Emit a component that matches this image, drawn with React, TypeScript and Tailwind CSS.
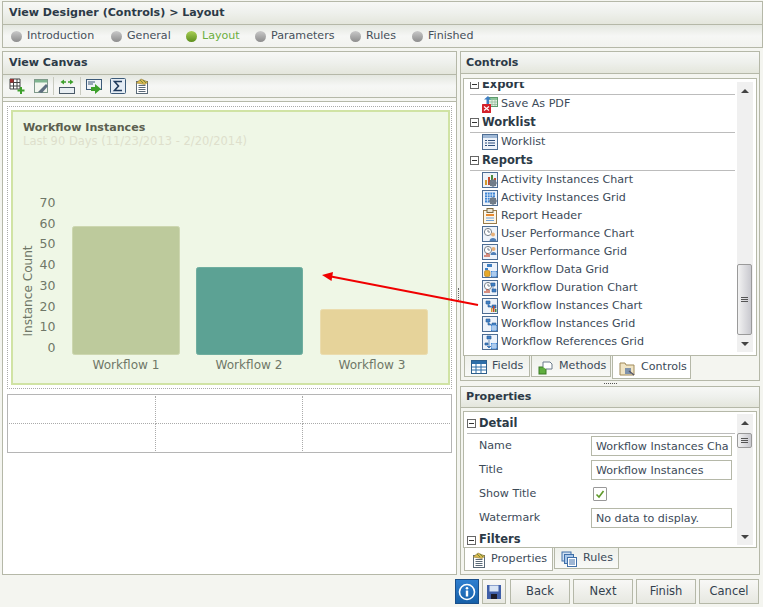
import React from "react";

const font = "font-['DejaVu_Sans',sans-serif]";
const headGrad = "bg-gradient-to-b from-[#f7f8f6] via-[#eef0ec] to-[#e4e6dc]";
const barGrad = "bg-gradient-to-b from-[#e4e7e0] via-[#f6f7f5] to-[#f2f3ef]";

type IconName = "pdf"|"list"|"chartGear"|"gridGear"|"header"|"perfChart"|"perfGrid"|"dataGrid"|"durChart"|"wfChart"|"wfGrid"|"refGrid";

function Frame({ children }: { children?: React.ReactNode }) {
  return (
    <svg width="16" height="16" viewBox="0 0 16 16" className="shrink-0">
      <rect x="0.5" y="0.5" width="15" height="15" fill="#eef3fa" stroke="#4d6d94" />
      {children}
    </svg>
  );
}
function Grid({ x = 9, y = 9 }: { x?: number; y?: number }) {
  return (
    <g>
      <rect x={x} y={y} width="6" height="6" fill="#3f86d6" />
      <path d={`M${x} ${y + 2}h6M${x} ${y + 4}h6M${x + 2} ${y}v6M${x + 4} ${y}v6`} stroke="#fff" strokeWidth="0.7" />
    </g>
  );
}
function Clock() {
  return <g><circle cx="6" cy="6" r="3.6" fill="#fff" stroke="#77818c" /><path d="M6 3.8V6h2" stroke="#77818c" fill="none" /></g>;
}
function Flow() {
  return <path d="M4 3h4v3H4zM10 7h4v3h-4zM6 6v3h4" fill="#3f7fc4" stroke="#2d5f9c" strokeWidth="0.6" />;
}
function Gear() {
  return <g><circle cx="11" cy="11" r="3.4" fill="#6f7b88" /><circle cx="11" cy="11" r="1.2" fill="#eef3fa" /><path d="M11 6.8v8.4M6.8 11h8.4M8 8l6 6M14 8l-6 6" stroke="#6f7b88" strokeWidth="1" /></g>;
}
function Bars() {
  return <g><rect x="3" y="8" width="2" height="5" fill="#d49a2c" /><rect x="6" y="5" width="2" height="8" fill="#c44a2e" /><rect x="9" y="3" width="2" height="10" fill="#4c8a3a" /><rect x="12" y="6" width="2" height="7" fill="#c44a2e" /></g>;
}

function TreeIcon({ name }: { name: IconName }) {
  switch (name) {
    case "pdf":
      return (
        <svg width="16" height="17" viewBox="0 0 16 17" className="shrink-0">
          <rect x="5.5" y="1.5" width="10" height="9" fill="#e5f2e0" stroke="#5d9a6a" />
          <rect x="6" y="2" width="9" height="2" fill="#8cc49a" />
          <path d="M6 6h9M6 8.5h9M10 4v6M13 4v6" stroke="#8db89a" strokeWidth="0.7" />
          <path d="M6 0 2 3.5h2.5V8H7V3.5h2z" fill="#3f7ec2" />
          <rect x="0" y="8" width="9" height="9" rx="0.5" fill="#d3202a" />
          <path d="M2 10.5l5 4M7 10.5l-5 4" stroke="#fff" strokeWidth="1.2" />
        </svg>
      );
    case "list":
      return <Frame><rect x="1" y="1" width="14" height="3" fill="#9fb8d6" /><path d="M3 6.5h2M6 6.5h7M3 9h2M6 9h7M3 11.5h2M6 11.5h7" stroke="#2d4f7c" strokeWidth="1.2" /></Frame>;
    case "chartGear":
      return <Frame><Bars /><Gear /></Frame>;
    case "gridGear":
      return <Frame><rect x="3" y="2.5" width="10" height="10" fill="#3f86d6" /><path d="M3 5h10M3 7.5h10M3 10h10M5.5 2.5v10M8 2.5v10M10.5 2.5v10" stroke="#fff" strokeWidth="0.6" /><Gear /></Frame>;
    case "header":
      return (
        <svg width="16" height="16" viewBox="0 0 16 16" className="shrink-0">
          <rect x="1.5" y="2.5" width="13" height="13" fill="#fdf6e6" stroke="#9a7c4a" />
          <rect x="5" y="0.5" width="6" height="4" fill="#e9e4d4" stroke="#7c6a44" />
          <path d="M4 7h8" stroke="#e98a2e" strokeWidth="2" /><path d="M4 10h8M4 12.5h8" stroke="#6fa0d8" />
        </svg>
      );
    case "perfChart":
      return <Frame><Clock /><circle cx="11" cy="8.5" r="2" fill="#e8b078" /><path d="M7.5 15c0-4 7-4 7 0z" fill="#4f7fb8" /></Frame>;
    case "perfGrid":
      return <Frame><Clock /><path d="M3 13v-2M5 13V9M7 13v-3" stroke="#c44a2e" strokeWidth="1.2" /><circle cx="11.5" cy="5" r="2" fill="#e8b078" /><path d="M8.5 11c0-4 6-4 6 0z" fill="#4f7fb8" /></Frame>;
    case "dataGrid":
      return <Frame><path d="M5 2h5v3H5zM3 6h3v2H3z" fill="#3f7fc4" /><rect x="2.5" y="8.5" width="5.5" height="6" rx="1.5" fill="#e6a92a" stroke="#a97a1a" strokeWidth="0.6" /><Grid /></Frame>;
    case "durChart":
      return <Frame><Clock /><path d="M3 13v-2M5 13V9M7 13v-3" stroke="#c44a2e" strokeWidth="1.2" /><path d="M9 3h4v3H9zM10 9h4v3h-4zM11 6v3" fill="#3f7fc4" stroke="#2d5f9c" strokeWidth="0.6" /></Frame>;
    case "wfChart":
      return <Frame><Flow /><rect x="9" y="10" width="1.5" height="4" fill="#d49a2c" /><rect x="11" y="8" width="1.5" height="6" fill="#c44a2e" /><rect x="13" y="11" width="1.5" height="3" fill="#4c8a3a" /></Frame>;
    case "wfGrid":
      return <Frame><Flow /><Grid /></Frame>;
    case "refGrid":
      return <Frame><path d="M5 2h4v3H5zM3 9h3v2H3zM7 6v6M5 12l2 2 2-2" fill="#3f7fc4" stroke="#2d5f9c" strokeWidth="0.7" /><Grid /></Frame>;
  }
}

function Minus() {
  return (
    <span className="w-[9px] h-[9px] border border-[#666] bg-white flex items-center justify-center shrink-0">
      <span className="w-[5px] h-px bg-[#333]" />
    </span>
  );
}

function GroupHead({ label, className = "" }: { label: string; className?: string }) {
  return (
    <div className={`h-[20px] flex items-center gap-[3px] border-b border-[#bcbcbc] font-bold text-[#2c3a47] text-[11.5px] ${className}`}>
      <Minus />
      {label}
    </div>
  );
}

function Item({ icon, label }: { icon: IconName; label: string }) {
  return (
    <div className="h-[18px] flex items-center gap-[3px] pl-[12px] text-[11.1px] text-[#3c4a58] whitespace-nowrap">
      <TreeIcon name={icon} />
      {label}
    </div>
  );
}

function Step({ label, active, className = "" }: { label: string; active?: boolean; className?: string }) {
  return (
    <div className={`flex items-center gap-[5px] ${active ? "text-[#6cae3e]" : "text-[#46505a]"} ${className}`}>
      <span className={`w-[11px] h-[11px] rounded-full ${active ? "bg-gradient-to-b from-[#a9cf55] to-[#5d8f1c]" : "bg-gradient-to-b from-[#c9c9c9] to-[#8d8d8d]"}`} />
      {label}
    </div>
  );
}

function Scrollbar({ thumbTop, thumbH, className = "" }: { thumbTop: number; thumbH: number; className?: string }) {
  return (
    <div className={`w-[16px] bg-[#f0f0f0] relative shrink-0 ${className}`}>
      <span className="absolute top-[7px] left-[4px] w-0 h-0 border-x-[4px] border-x-transparent border-b-[4px] border-b-[#444]" />
      <span className="absolute bottom-[6px] left-[4px] w-0 h-0 border-x-[4px] border-x-transparent border-t-[4px] border-t-[#444]" />
      <div style={{ top: thumbTop, height: thumbH }} className="absolute left-0 w-[15px] rounded-[2px] border border-[#9a9a9a] bg-gradient-to-r from-[#f2f2f2] to-[#c9c9cf] flex flex-col items-center justify-center gap-px">
        <span className="w-[7px] h-px bg-[#555]" />
        <span className="w-[7px] h-px bg-[#555]" />
        <span className="w-[7px] h-px bg-[#555]" />
      </div>
    </div>
  );
}

function ToolIcon({ children, className = "" }: { children: React.ReactNode; className?: string }) {
  return <svg width="16" height="16" viewBox="0 0 16 16" className={`shrink-0 ${className}`}>{children}</svg>;
}

function PropsIcon({ className = "" }: { className?: string }) {
  return (
    <ToolIcon className={className}>
      <rect x="2.5" y="3.5" width="11" height="12" fill="#fff" stroke="#5a6a78" />
      <path d="M4.5 7.5h7M4.5 9.5h7M4.5 11.5h7M4.5 13.5h7" stroke="#5a6a78" />
      <path d="M2 5 7 1l7 3-3 2.5z" fill="#d9b84e" stroke="#8c7a3c" strokeWidth="0.6" />
      <path d="M6 2l3 3M9 2l3 3" stroke="#5f7f3a" strokeWidth="0.8" />
    </ToolIcon>
  );
}

function Tab({ label, icon, active, w, gap = "gap-[6px]" }: { label: string; icon: React.ReactNode; active?: boolean; w: string; gap?: string }) {
  return (
    <div className={`${w} ${gap} flex items-center pl-[6px] pt-px text-[11.1px] text-[#3c4a58] border border-[#b5b8a8] border-t-0 ${active ? "h-[23px] bg-white" : "h-[21px] bg-gradient-to-b from-[#eef0ea] to-[#f8f9f7]"}`}>
      {icon}
      {label}
    </div>
  );
}

function Btn({ label }: { label: string }) {
  return (
    <button className="w-[60px] h-[25px] pt-px border border-[#b5b8a8] bg-gradient-to-b from-[#f8f8f6] to-[#e7e8e1] text-[11.5px] text-[#33414e]">
      {label}
    </button>
  );
}

function Chart() {
  const ticks = [70, 60, 50, 40, 30, 20, 10, 0];
  const tc = "#6f7768";
  return (
    <svg width="434" height="271" viewBox="0 0 434 271" className="block">
      <g fontFamily="'DejaVu Sans',sans-serif" fontSize="12.5" fill={tc}>
        {ticks.map((t, i) => (
          <text key={t} x="42.5" y={95 + i * 20.7} textAnchor="end">{t}</text>
        ))}
        <text transform="translate(19,179) rotate(-90)" fontSize="12.1" textAnchor="middle">Instance Count</text>
        <rect x="59.5" y="114.5" width="107" height="128" rx="2" fill="#bdca9c" stroke="#cdd7b0" />
        <rect x="183.5" y="155.5" width="106" height="87" rx="2" fill="#5ca294" stroke="#6fae9f" />
        <rect x="307.5" y="197.5" width="107" height="45" rx="2" fill="#e6d39a" stroke="#ebdcae" />
        <text x="113" y="257" textAnchor="middle" fontSize="12.1">Workflow 1</text>
        <text x="236" y="257" textAnchor="middle" fontSize="12.1">Workflow 2</text>
        <text x="359" y="257" textAnchor="middle" fontSize="12.1">Workflow 3</text>
      </g>
    </svg>
  );
}

const reportItems: [IconName, string][] = [
  ["chartGear", "Activity Instances Chart"],
  ["gridGear", "Activity Instances Grid"],
  ["header", "Report Header"],
  ["perfChart", "User Performance Chart"],
  ["perfGrid", "User Performance Grid"],
  ["dataGrid", "Workflow Data Grid"],
  ["durChart", "Workflow Duration Chart"],
  ["wfChart", "Workflow Instances Chart"],
  ["wfGrid", "Workflow Instances Grid"],
  ["refGrid", "Workflow References Grid"],
];

function PropRow({ label, children }: { label: string; children: React.ReactNode }) {
  return (
    <div className="h-[24px] flex items-center pl-[12px] text-[11.1px] text-[#3c4a58]">
      <span className="w-[112px] shrink-0">{label}</span>
      {children}
    </div>
  );
}

function PropInput({ value }: { value: string }) {
  return (
    <div className="w-[141px] h-[20px] border border-[#b5b8a8] bg-white pl-[4px] leading-[20px] whitespace-nowrap text-[11.1px] text-[#3c4a58]">
      {value}
    </div>
  );
}

export default function App() {
  return (
    <div className={`relative w-[763px] h-[607px] overflow-hidden bg-[#f4f5f0] ${font} flex flex-col pt-px pl-[2px] pr-[3px]`}>
      {/* Title + steps */}
      <div className="border border-[#b5b8a8] bg-[#f4f5f0] mr-[-3px] h-[47px] flex flex-col shrink-0">
        <div className={`h-[23px] pt-px ${headGrad} flex items-center pl-[6px] font-bold text-[11.1px] text-[#2c3a47] border-b border-[#b5b8a8]`}>
          View Designer (Controls) &gt; Layout
        </div>
        <div className={`h-[22px] pt-px ${barGrad} flex items-center pl-[8px] text-[11.1px]`}>
          <Step label="Introduction" className="w-[100px]" />
          <Step label="General" className="w-[75px]" />
          <Step label="Layout" active className="w-[69px]" />
          <Step label="Parameters" className="w-[95px]" />
          <Step label="Rules" className="w-[62px]" />
          <Step label="Finished" />
        </div>
      </div>

      {/* Main */}
      <div className="flex mt-[3px] h-[524px] shrink-0">
        {/* Left panel */}
        <div className="w-[455px] h-[524px] border border-[#b5b8a8] bg-[#f4f5f0] flex flex-col shrink-0">
          <div className={`h-[23px] pt-px ${headGrad} flex items-center pl-[6px] font-bold text-[11.1px] text-[#2c3a47] border-b border-[#b5b8a8]`}>
            View Canvas
          </div>
          <div className={`h-[23px] ${barGrad} flex items-center pl-[6px] border-b border-[#b5b8a8]`}>
            <ToolIcon>
              <path d="M1 1h10v10H1z" fill="#fff" stroke="#444" />
              <path d="M4.5 1v10M8 1v10M1 4.5h10M1 8h10" stroke="#444" />
              <rect x="1" y="1" width="3.5" height="3.5" fill="#a03030" />
              <path d="M12 9v7M8.5 12.5h7" stroke="#3da02c" strokeWidth="2" />
            </ToolIcon>
            <ToolIcon className="ml-[8px]">
              <rect x="1.5" y="1.5" width="13" height="13" fill="#f2f6ee" stroke="#7f9a8a" />
              <rect x="2" y="2" width="12" height="2.5" fill="#7fb58f" />
              <path d="M5 14l8-8 2 2-6 7z" fill="#5f6f80" />
            </ToolIcon>
            <span className="ml-[4px] w-px h-[18px] bg-[#c9cbc0]" />
            <ToolIcon className="ml-[5px]">
              <path d="M3 4h4M9 4h4" stroke="#3da02c" strokeWidth="1.5" />
              <path d="M5 1.5v5L1.5 4zM11 1.5v5L14.5 4z" fill="#3da02c" />
              <rect x="0.5" y="9.5" width="15" height="6" fill="#e8eef2" stroke="#4a5a68" />
            </ToolIcon>
            <span className="ml-[5px] w-px h-[18px] bg-[#c9cbc0]" />
            <ToolIcon className="ml-[5px]">
              <rect x="0.5" y="1.5" width="15" height="10" fill="#eef2f6" stroke="#3c5a78" />
              <path d="M2 4h7M2 6h5" stroke="#3c5a78" />
              <path d="M5 9h4V6l6 5-6 5v-3H5z" fill="#3da02c" />
            </ToolIcon>
            <ToolIcon className="ml-[8px]">
              <rect x="0.5" y="0.5" width="15" height="15" rx="1" fill="#e4ecf4" stroke="#3c5a78" />
              <path d="M12 3.5H4.5L8.5 8l-4 4.5H12" fill="none" stroke="#1f3a5c" strokeWidth="1.6" />
            </ToolIcon>
            <PropsIcon className="ml-[8px]" />
          </div>
          <div className="flex-1 mt-[3px] px-[4px] pt-[4px] bg-white border-t border-[#b5b8a8]">
            <div className="border border-dotted border-[#aaa] h-[283px] pt-[3px] pl-[3px] pr-px">
              <div className="border-[2px] border-[#d0e3a4] bg-[#eff7e6] h-[275px] relative">
                <div className="absolute left-[10px] top-[8px] text-[11.1px] font-bold text-[#5c5f50]">Workflow Instances</div>
                <div className="absolute left-[10px] top-[21px] text-[11.5px] text-[#dedfcc] whitespace-nowrap">Last 90 Days (11/23/2013 - 2/20/2014)</div>
                <Chart />
              </div>
            </div>
            <div className="mt-[5px] border border-[#b5b5b5] h-[59px] grid grid-cols-3 grid-rows-2 p-px">
              <div className="border-r border-b border-dotted border-[#aaa]" />
              <div className="border-r border-b border-dotted border-[#aaa]" />
              <div className="border-b border-dotted border-[#aaa]" />
              <div className="border-r border-dotted border-[#aaa]" />
              <div className="border-r border-dotted border-[#aaa]" />
              <div />
            </div>
          </div>
        </div>

        {/* Splitter */}
        <div className="w-[3px] shrink-0 flex items-center justify-center">
          <div className="h-[14px] w-px border-l border-dotted border-[#666] -mt-[36px]" />
        </div>

        {/* Right column */}
        <div className="w-[300px] flex flex-col shrink-0">
          <div className="h-[330px] border border-[#b5b8a8] flex flex-col shrink-0 bg-[#f4f5f0]">
            <div className={`h-[22px] pt-px ${headGrad} flex items-center pl-[5px] font-bold text-[11.1px] text-[#2c3a47] border-b border-[#b5b8a8]`}>
              Controls
            </div>
            <div className="mx-[2px] mt-[4px] h-[278px] border border-[#b5b8a8] bg-white flex py-[3px] pl-[6px] pr-[3px] overflow-hidden shrink-0">
              <div className="flex-1 overflow-hidden">
                <div className="-mt-[7px]">
                  <GroupHead label="Export" />
                  <Item icon="pdf" label="Save As PDF" />
                  <GroupHead label="Worklist" />
                  <Item icon="list" label="Worklist" />
                  <GroupHead label="Reports" />
                  {reportItems.map(([i, l]) => <Item key={l} icon={i} label={l} />)}
                </div>
              </div>
              <Scrollbar thumbTop={182} thumbH={71} className="ml-[2px]" />
            </div>
            <div className="flex pl-[3px] gap-px">
              <Tab w="w-[66px]" gap="gap-[5px]" label="Fields" icon={
                <ToolIcon><rect x="0.5" y="1.5" width="15" height="13" fill="#fff" stroke="#2d5f8c" /><rect x="1" y="2" width="14" height="3" fill="#2d6ea8" /><path d="M1 8h14M1 11h14M5 5v9M10 5v9" stroke="#2d6ea8" /></ToolIcon>
              } />
              <Tab w="w-[80px]" gap="gap-[5px]" label="Methods" icon={
                <ToolIcon><rect x="1" y="8" width="7" height="7" fill="#5fae3e" stroke="#3a7a24" /><path d="M5 8V3h7l2 2v5H8" fill="#fff" stroke="#6a7a8a" /></ToolIcon>
              } />
              <Tab w="w-[79px]" active label="Controls" icon={
                <ToolIcon><path d="M1 3h5l1 2h8v10H1z" fill="#f0e4c4" stroke="#a08a5a" /><rect x="6" y="8" width="6" height="6" fill="#7f93ad" /><path d="M10 11l5 4" stroke="#556" strokeWidth="1.5" /></ToolIcon>
              } />
            </div>
          </div>

          <div className="h-[5px] flex items-center justify-center shrink-0">
            <span className="w-[13px] border-t border-dotted border-[#555]" />
          </div>

          <div className="h-[189px] border border-[#b5b8a8] flex flex-col shrink-0 bg-[#f4f5f0]">
            <div className={`h-[21px] pt-px ${headGrad} flex items-center pl-[5px] font-bold text-[11.1px] text-[#2c3a47] border-b border-[#b5b8a8]`}>
              Properties
            </div>
            <div className="mx-[2px] mt-[3px] h-[137px] border border-[#b5b8a8] bg-white flex py-[2px] pl-[3px] pr-[3px] overflow-hidden shrink-0">
              <div className="flex-1 overflow-hidden">
                <GroupHead label="Detail" />
                <PropRow label="Name"><PropInput value="Workflow Instances Cha" /></PropRow>
                <PropRow label="Title"><PropInput value="Workflow Instances" /></PropRow>
                <PropRow label="Show Title">
                  <span className="ml-[2px] w-[14px] h-[14px] border border-[#999] rounded-[1px] bg-white flex items-center justify-center">
                    <svg width="10" height="10" viewBox="0 0 10 10"><path d="M1.5 5.5 4 8l4.5-6" fill="none" stroke="#5f9a2a" strokeWidth="1.6" /></svg>
                  </span>
                </PropRow>
                <PropRow label="Watermark"><PropInput value="No data to display." /></PropRow>
                <GroupHead label="Filters" className="border-b-0" />
              </div>
              <Scrollbar thumbTop={19} thumbH={15} className="ml-[2px]" />
            </div>
            <div className="flex pl-[3px] gap-px">
              <Tab w="w-[89px]" gap="gap-[4px]" active label="Properties" icon={<PropsIcon />} />
              <Tab w="w-[65px]" label="Rules" icon={
                <ToolIcon><rect x="1" y="1" width="9" height="9" fill="#cfe0f2" stroke="#3f6fa8" /><rect x="3.5" y="3.5" width="9" height="9" fill="#a9c8ea" stroke="#3f6fa8" /><rect x="6.5" y="6.5" width="9" height="9" fill="#fff" stroke="#3f6fa8" /><path d="M8 9h6M8 11h6M8 13h6" stroke="#3f6fa8" /></ToolIcon>
              } />
            </div>
          </div>
        </div>
      </div>

      {/* Footer */}
      <div className="flex justify-end items-center gap-[3px] mt-[4px] pr-px">
        <button className="w-[24px] h-[25px] bg-gradient-to-b from-[#2f7fd0] to-[#1660a8] border border-[#1a4f8a] flex items-center justify-center">
          <svg width="18" height="18" viewBox="0 0 18 18"><circle cx="9" cy="9" r="7.5" fill="none" stroke="#fff" strokeWidth="1.6" /><circle cx="9" cy="5.2" r="1.3" fill="#fff" /><rect x="7.8" y="7.5" width="2.4" height="6" fill="#fff" /></svg>
        </button>
        <button className="w-[24px] h-[25px] border border-[#b5b8a8] bg-gradient-to-b from-[#f8f8f6] to-[#e7e8e1] flex items-center justify-center mr-px">
          <svg width="16" height="16" viewBox="0 0 16 16"><path d="M1 1h14v14H1z" fill="#3f5fa8" /><rect x="3.5" y="1.5" width="9" height="6" fill="#d8e4f4" /><rect x="5" y="10" width="6" height="5" fill="#1d1d2a" /></svg>
        </button>
        <Btn label="Back" />
        <Btn label="Next" />
        <Btn label="Finish" />
        <Btn label="Cancel" />
      </div>

      {/* Annotation arrow */}
      <svg className="absolute left-0 top-0 pointer-events-none" width="763" height="607">
        <path d="M478 305 331 276.5" stroke="#f00000" strokeWidth="1.8" />
        <path d="M322 275 333 272 331.5 281z" fill="#f00000" />
      </svg>
    </div>
  );
}
